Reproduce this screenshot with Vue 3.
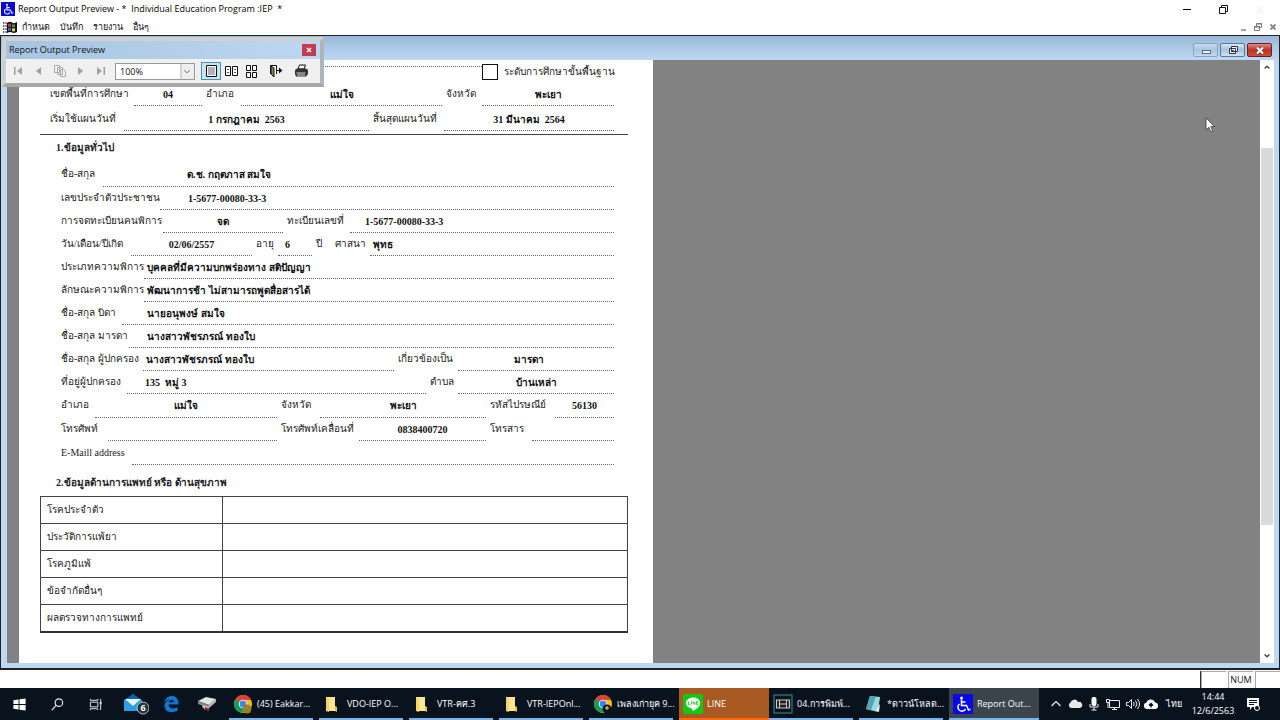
<script setup>
import { ref } from 'vue'

const zoom = ref('100%')
const basicLevel = ref(false)

const menus = ['กำหนด', 'บันทึก', 'รายงาน', 'อื่นๆ']

const planRows = [
  { key: 'area', cells: [
    { label: 'เขตพื้นที่การศึกษา' }, { value: '04' },
    { label: 'อำเภอ' }, { value: 'แม่ใจ' },
    { label: 'จังหวัด' }, { value: 'พะเยา' } ] },
  { key: 'period', cells: [
    { label: 'เริ่มใช้แผนวันที่' }, { value: '1 กรกฎาคม  2563' },
    { label: 'สิ้นสุดแผนวันที่' }, { value: '31 มีนาคม  2564' } ] },
]

const generalRows = [
  { key: 'name', cells: [{ label: 'ชื่อ-สกุล' }, { value: 'ด.ช. กฤตภาส สมใจ', at: 'far' }] },
  { key: 'citizen', cells: [{ label: 'เลขประจำตัวประชาชน' }, { value: '1-5677-00080-33-3', at: 'mid' }] },
  { key: 'register', cells: [
    { label: 'การจดทะเบียนคนพิการ' }, { value: 'จด' },
    { label: 'ทะเบียนเลขที่' }, { value: '1-5677-00080-33-3', at: 'near' } ] },
  { key: 'birth', cells: [
    { label: 'วัน/เดือน/ปีเกิด' }, { value: '02/06/2557' },
    { label: 'อายุ' }, { value: '6', at: 'tight' },
    { label: 'ปี' }, { label: 'ศาสนา' }, { value: 'พุทธ', at: 'start' } ] },
  { key: 'kind', cells: [{ label: 'ประเภทความพิการ' }, { value: 'บุคคลที่มีความบกพร่องทาง สติปัญญา', at: 'start' }] },
  { key: 'kind', cells: [{ label: 'ลักษณะความพิการ' }, { value: 'พัฒนาการช้า ไม่สามารถพูดสื่อสารได้', at: 'start' }] },
  { key: 'father', cells: [{ label: 'ชื่อ-สกุล บิดา' }, { value: 'นายอนุพงษ์ สมใจ', at: 'wide' }] },
  { key: 'mother', cells: [{ label: 'ชื่อ-สกุล มารดา' }, { value: 'นางสาวพัชรภรณ์ ทองใบ', at: 'inset' }] },
  { key: 'guardian', cells: [
    { label: 'ชื่อ-สกุล ผู้ปกครอง' }, { value: 'นางสาวพัชรภรณ์ ทองใบ', at: 'start' },
    { label: 'เกี่ยวข้องเป็น' }, { value: 'มารดา', at: 'shifted' } ] },
  { key: 'address', cells: [
    { label: 'ที่อยู่ผู้ปกครอง' }, { value: '135  หมู่ 3', at: 'inset' },
    { label: 'ตำบล' }, { value: 'บ้านเหล่า' } ] },
  { key: 'district', cells: [
    { label: 'อำเภอ' }, { value: 'แม่ใจ' },
    { label: 'จังหวัด' }, { value: 'พะเยา' },
    { label: 'รหัสไปรษณีย์' }, { value: '56130' } ] },
  { key: 'phone', cells: [
    { label: 'โทรศัพท์' }, { value: '' },
    { label: 'โทรศัพท์เคลื่อนที่' }, { value: '0838400720' },
    { label: 'โทรสาร' }, { value: '' } ] },
  { key: 'email', cells: [{ label: 'E-Maill address' }, { value: '' }] },
]

const healthRows = ['โรคประจำตัว', 'ประวัติการแพ้ยา', 'โรคภูมิแพ้', 'ข้อจำกัดอื่นๆ', 'ผลตรวจทางการแพทย์']

const tasks = [
  { icon: 'chrome', text: '(45) Eakkar...' },
  { icon: 'folder', text: 'VDO-IEP O...' },
  { icon: 'folder', text: 'VTR-คศ.3' },
  { icon: 'folder', text: 'VTR-IEPOnl...' },
  { icon: 'chrome', text: 'เพลงเก่ายุค 9...' },
  { icon: 'line', text: 'LINE', state: 'alert' },
  { icon: 'film', text: '04.การพิมพ์...' },
  { icon: 'note', text: '*ดาวน์โหลด...' },
  { icon: 'access', text: 'Report Out...', state: 'active' },
]
</script>

<template>
  <div class="desktop">
    <header class="titlebar">
      <svg class="app-icon" viewBox="0 0 20 20"><rect width="20" height="20" fill="#0808d8" /><g fill="none" stroke="#fff" stroke-width="1.500"><path d="M8.500 5.500v6h5l2 4.500 2-.7M8.500 8h4" /><path d="M6.500 10a4 4 0 1 0 6 5" /></g><circle cx="8.500" cy="4" r="1.500" fill="#fff" /></svg>
      <h1>Report Output Preview - *&nbsp; Individual Education Program :IEP&nbsp; *</h1>
      <div class="win-buttons">
        <button aria-label="Minimize"><svg viewBox="0 0 12 12"><path d="M2 6.500h8" stroke="#000" /></svg></button>
        <button aria-label="Restore"><svg viewBox="0 0 12 12" fill="none" stroke="#111"><path d="M2.500 4.500h6v6h-6zM4.500 4.500v-2h6v6h-2" /></svg></button>
        <button aria-label="Close"><svg viewBox="0 0 12 12" stroke="#eee"><path d="M3 3l7 7M10 3l-7 7" /></svg></button>
      </div>
    </header>

    <nav class="menubar">
      <svg class="flag" viewBox="0 0 14 12"><path d="M4 2q3-2 5-.5t5-.5v10q-3 1.500-5 .5t-5 .5z" fill="#111" /><path d="M0 2h4M0 5h4M0 8h4M0 11h4" stroke="#333" stroke-width="1.500" stroke-dasharray="1 .6" /><path d="M5 3q2-1 3 0v3q-1-1-3 0z" fill="#e03030" /><path d="M9 3q1.500 1 3 0v3q-1.500 1-3 0z" fill="#3a9a40" /><path d="M5 7q2-1 3 0v3q-1-1-3 0z" fill="#4060e0" /><path d="M9 7q1.500 1 3 0v3q-1.500 1-3 0z" fill="#e8d040" /></svg>
      <button v-for="m in menus" :key="m">{{ m }}</button>
      <div class="child-buttons">
        <button aria-label="Minimize report"><svg viewBox="0 0 10 10"><path d="M3 8h5" stroke="#888" stroke-width="1.500" /></svg></button>
        <button aria-label="Restore report"><svg viewBox="0 0 10 10" fill="none" stroke="#777"><path d="M1.500 4.500h5v4h-5zM3.500 4V1.500h5v4H7M3.500 2h5M1.500 5h5" /></svg></button>
        <button aria-label="Close report"><svg viewBox="0 0 10 10" stroke="#888" stroke-width="1.800"><path d="M2.500 2.500l5 5M7.500 2.500l-5 5" /></svg></button>
      </div>
    </nav>

    <main class="child">
      <div class="child-title">
        <button class="glass" aria-label="Minimize window"><svg viewBox="0 0 24 13"><rect x="8.500" y="6.500" width="8" height="3" fill="#eef4fa" stroke="#667" /></svg></button>
        <button class="glass bright" aria-label="Restore window"><svg viewBox="0 0 24 13" fill="#eef4fa" stroke="#334"><path d="M10.500 2.500h6v5h-6zM8.500 4.500h6v5h-6z" /><path d="M10.500 6.500h2v1h-2z" /></svg></button>
        <button class="glass red" aria-label="Close window"><svg viewBox="0 0 24 13"><path d="M9 3.500l6 6M15 3.500l-6 6" stroke="#533" stroke-width="3.400" /><path d="M9 3.500l6 6M15 3.500l-6 6" stroke="#fff" stroke-width="2.200" /></svg></button>
      </div>

      <div class="viewer">
        <div class="canvas">
          <article class="page">
            <div class="level">
              <span class="dots"></span>
              <label><input v-model="basicLevel" type="checkbox" />ระดับการศึกษาขั้นพื้นฐาน</label>
            </div>
            <section class="plan">
              <div v-for="row in planRows" :key="row.key" class="row" :class="row.key">
                <template v-for="(c, i) in row.cells" :key="i">
                  <span v-if="c.label" class="label">{{ c.label }}</span>
                  <span v-else class="value">{{ c.value }}</span>
                </template>
              </div>
            </section>
            <section class="general">
              <h2>1.ข้อมูลทั่วไป</h2>
              <div v-for="(row, r) in generalRows" :key="r" class="row" :class="row.key">
                <template v-for="(c, i) in row.cells" :key="i">
                  <span v-if="c.label" class="label">{{ c.label }}</span>
                  <span v-else class="value" :class="c.at">{{ c.value }}</span>
                </template>
              </div>
            </section>
            <section class="health">
              <h2>2.ข้อมูลด้านการแพทย์ หรือ ด้านสุขภาพ</h2>
              <table>
                <tbody>
                  <tr v-for="h in healthRows" :key="h"><th scope="row">{{ h }}</th><td></td></tr>
                </tbody>
              </table>
            </section>
          </article>
        </div>
        <div class="scrollbar">
          <button aria-label="Scroll up"><svg viewBox="0 0 10 10"><path d="M2 7l3-3 3 3" fill="none" stroke="#444" stroke-width="1.800" /></svg></button>
          <div class="track"><div class="thumb"></div></div>
          <button aria-label="Scroll down"><svg viewBox="0 0 10 10"><path d="M2 3l3 3 3-3" fill="none" stroke="#444" stroke-width="1.800" /></svg></button>
        </div>
        <svg class="pointer" viewBox="0 0 10 16"><path d="M1 .8v12l2.800-2.600 2 4.600 2-.9-2-4.400h3.600z" fill="#fff" stroke="#333" stroke-width=".8" /></svg>
      </div>
    </main>

    <div class="toolbox">
      <div class="toolbox-title">
        <span>Report Output Preview</span>
        <button aria-label="Close toolbar"><svg viewBox="0 0 8 8"><path d="M2 2l4 4M6 2L2 6" stroke="#fff" stroke-width="1.500" /></svg></button>
      </div>
      <div class="tools">
        <button class="nav" aria-label="First page"><svg viewBox="0 0 16 16" fill="#a0a0a0"><path d="M4 4h1.500v8H4zM12 4v8L7 8z" /></svg></button>
        <button class="nav" aria-label="Previous page"><svg viewBox="0 0 16 16" fill="#a0a0a0"><path d="M11 4v8L6 8z" /></svg></button>
        <button class="nav wide-nav" aria-label="Go to page"><svg viewBox="0 0 16 16" fill="#f4f4f4" stroke="#a8a8a8"><path d="M2.500 2.500h5v7h-5zM5.500 4.500h5v7h-5zM8.500 6.500h3l2 2v5h-5z" /></svg></button>
        <button class="nav" aria-label="Next page"><svg viewBox="0 0 16 16" fill="#a0a0a0"><path d="M5 4v8l5-4z" /></svg></button>
        <button class="nav" aria-label="Last page"><svg viewBox="0 0 16 16" fill="#a0a0a0"><path d="M4 4v8l5-4zM10.500 4H12v8h-1.500z" /></svg></button>
        <div class="zoom">
          <select v-model="zoom" aria-label="Zoom"><option>100%</option><option>75%</option></select>
          <svg viewBox="0 0 14 16"><path d="M.5 0v16" stroke="#b8b8b8" /><path d="M4 6.500l3 3 3-3" fill="none" stroke="#666" /></svg>
        </div>
        <button class="tool on" aria-label="One page"><svg viewBox="0 0 16 16"><path d="M3.500 2.500h10v11h-10z" fill="#fff" stroke="#111" /><path d="M5 5h7M5 7h7M5 9h7M5 11h7" stroke="#667" /></svg></button>
        <button class="tool" aria-label="Two pages"><svg viewBox="0 0 16 16" fill="#fff" stroke="#111"><path d="M2.500 3.500h5v9h-5zM9.500 3.500h5v9h-5z" /><path d="M4 6.500h2M4 9.500h2M11 6.500h2M11 9.500h2" stroke="#555" /></svg></button>
        <button class="tool" aria-label="Four pages"><svg viewBox="0 0 16 16" fill="#fff" stroke="#111"><path d="M3.500 2.500h4v5h-4zM9.500 2.500h4v5h-4zM3.500 9.500h4v5h-4zM9.500 9.500h4v5h-4z" /></svg></button>
        <button class="tool exit" aria-label="Close preview"><svg viewBox="0 0 16 16"><path d="M2.500 11V2.500h6V11" fill="#fff" stroke="#111" /><path d="M3 3l3 2v9l-3-3z" fill="#8a8a50" stroke="#111" /><path d="M8 7h3V4.500L14.500 7.500 11 10.500V8H8z" fill="#111" /></svg></button>
        <button class="tool" aria-label="Print"><svg viewBox="0 0 16 16"><path d="M5 6l1.500-4h6L11 6z" fill="#fff" stroke="#111" /><path d="M2 7l2-1.500h9l2 1.500v4l-2 2.500H3L2 11z" fill="#333" /><path d="M3.500 10h9M4 12h8" stroke="#ddd" /></svg></button>
      </div>
    </div>

    <footer class="status"><span class="cell"></span><span class="cell">NUM</span><span class="cell"></span></footer>

    <footer class="taskbar">
      <button class="sys" aria-label="Start"><svg viewBox="0 0 16 16" fill="#fff"><path d="M1.500 3.500L7 2.700v4.800H1.500zM8 2.500l6.500-1v6H8zM1.500 8.500H7v4.800l-5.500-.8zM8 8.500h6.500v6l-6.500-1z" /></svg></button>
      <button class="sys" aria-label="Search"><svg viewBox="0 0 16 16" fill="none" stroke="#eee" stroke-width="1.200"><circle cx="9.500" cy="6" r="4" /><path d="M6.500 9L2 14" /></svg></button>
      <button class="sys" aria-label="Task view"><svg viewBox="0 0 16 16" fill="none" stroke="#eee"><path d="M2.500 5.500h8v5h-8zM2.500 2v1.500h8V2M2.500 14v-1.500h8V14M13.500 2v3M13.500 8v6" /><path d="M13.500 5v3" stroke-width="2" /></svg></button>
      <button class="app mail" aria-label="Mail"><svg viewBox="0 0 26 24"><path d="M1 8l9-6 9 6v11H1z" fill="#0c62b0" /><path d="M1 8h18v11H1z" fill="#2aa0e8" /><path d="M2 7h16l-8 7z" fill="#e8f5ff" /><circle cx="20" cy="16" r="6" fill="#26323c" stroke="#b8c0c8" /></svg><span class="badge">6</span></button>
      <button class="app" aria-label="Edge"><svg viewBox="0 0 20 20"><path d="M3 9C4 4 8 1.500 11.500 2c4 .4 6 3.500 6 8.500H7.500c.3 4 5 5 9 2.800v3.500C10 20 3 17.500 3.500 11.500 4 8 7 6 9 5.500 6 5.500 4 7.500 3 9z" fill="#0f78d4" /><path d="M7.700 8.300h5.500c0-3.500-5-3.600-5.500 0z" fill="#08131d" /></svg></button>
      <button class="app" aria-label="Scanner"><svg viewBox="0 0 20 20"><path d="M1 7l8-4 10 2-7 6z" fill="#e4e4e4" /><path d="M1 7l11 4v3L1 10z" fill="#888" /><path d="M12 11l7-6v3l-7 6z" fill="#bbb" /><path d="M5 11l7 2v4l-6-3z" fill="#c8c8c8" /><path d="M8 13l4 1.500V17l-4-1.500z" fill="#b02020" /></svg></button>
      <div class="tasks">
        <button v-for="(t, i) in tasks" :key="i" class="task" :class="t.state">
          <svg v-if="t.icon === 'chrome'" viewBox="0 0 20 20"><circle cx="10" cy="10" r="9" fill="#f4c20d" /><path d="M10 10L2.200 5.500A9 9 0 0 1 18 6h-8z" fill="#db4437" /><path d="M10 10L2.200 5.500A9 9 0 0 0 9.500 19l4-7z" fill="#0f9d58" /><circle cx="10" cy="10" r="4.300" fill="#fff" /><circle cx="10" cy="10" r="3.400" fill="#4285f4" /><circle cx="14" cy="15" r="4.500" :fill="i ? '#111' : '#a87828'" /><circle cx="14" cy="14" r="1.800" :fill="i ? '#aaa' : '#68a040'" /></svg>
          <svg v-else-if="t.icon === 'folder'" viewBox="0 0 20 20"><path d="M3 3h9v12l2 1v1H3z" fill="#fbe596" /><path d="M3 3l3 2v13l-3-1z" fill="#f6d468" /><path d="M12 12l2 1v5l-2-1z" fill="#e8c050" /></svg>
          <svg v-else-if="t.icon === 'line'" viewBox="0 0 20 20"><rect width="20" height="20" rx="2" fill="#12c812" /><path d="M10 3.500c-4 0-7 2.500-7 5.500s2.500 5 6 5.500l.8 2.500c4-2 7.200-4.500 7.200-8s-3-5.500-7-5.500z" fill="#fff" /><path d="M5.500 7.500v3H7M8.500 7.500v3M10 10.500v-3l2 3v-3M15 7.500h-1.500v3H15M13.500 9H15" fill="none" stroke="#12c812" stroke-width=".8" /></svg>
          <svg v-else-if="t.icon === 'film'" viewBox="0 0 20 20"><rect x="1" y="1" width="18" height="18" fill="#0c1418" stroke="#3c8c9c" /><path d="M3.500 6h13v8h-13z" fill="#222" stroke="#ccc" stroke-width="1.200" /><path d="M6.500 6v8M13.500 6v8M7 10h6" stroke="#ccc" /></svg>
          <svg v-else-if="t.icon === 'note'" viewBox="0 0 20 20"><path d="M7 2l10 1-2 15-12-3z" fill="#9fd8dc" /><path d="M7 2l6 .7L8 16l-5-1z" fill="#4ea8b4" /><path d="M13 16l4-6-1 8z" fill="#e8f8f8" /></svg>
          <svg v-else viewBox="0 0 20 20"><rect width="20" height="20" fill="#0808e8" /><g fill="none" stroke="#fff" stroke-width="1.500"><path d="M8.500 5.500v6h5l2 4.500 2-.7M8.500 8h4" /><path d="M6.500 10a4 4 0 1 0 6 5" /></g><circle cx="8.500" cy="4" r="1.500" fill="#fff" /></svg>
          <span>{{ t.text }}</span>
        </button>
      </div>
      <div class="tray">
        <svg viewBox="0 0 16 16"><path d="M3.500 10L8 5.500l4.500 4.500" fill="none" stroke="#eee" stroke-width="1.200" /></svg>
        <svg viewBox="0 0 16 16"><path d="M4 12a3 3 0 0 1-.5-5.500A4 4 0 0 1 11 6a3 3 0 0 1 2 6z" fill="#e8e8e8" /></svg>
        <svg viewBox="0 0 16 16"><rect x="5.500" y="1" width="5" height="9" rx="2" fill="#fff" /><path d="M4 8v3h8V8M8 11v3M5.500 14h5" fill="none" stroke="#eee" /></svg>
        <svg viewBox="0 0 16 16" fill="none" stroke="#eee"><path d="M4.500 4.500h10v7h-10zM9.500 12v2M7 13.500h5" /><path d="M1.500 3.500h3v3h-3zM3 7v5" /></svg>
        <svg viewBox="0 0 16 16" fill="none" stroke="#eee"><path d="M2.500 6.500h2l3-3v9l-3-3h-2zM9.500 6q1.500 2 0 4M11.500 4.500q3 3.500 0 7M13.500 3q4 5 0 10" /></svg>
        <svg viewBox="0 0 16 16"><path d="M4 13a3.300 3.300 0 0 1-.5-6.500A4.500 4.500 0 0 1 12 6.500 3.300 3.300 0 0 1 12.500 13z" fill="#fff" /><path d="M8 11.500V8M6 9.500l2-2 2 2" fill="none" stroke="#08131d" stroke-width="1.400" /></svg>
        <span class="lang">ไทย</span>
        <time class="clock">14:44<br />12/6/2563</time>
        <svg class="notice" viewBox="0 0 16 16"><path d="M2 2h12v9H7l-2 3v-3H2z" fill="#fff" /><path d="M4 4.500h8M4 6.500h8M4 8.500h5" stroke="#08131d" /><circle cx="12" cy="12" r="2.500" fill="#08131d" stroke="#fff" /></svg>
      </div>
    </footer>
  </div>
</template>

<style>
html, body { margin: 0; background: #fff; overflow: hidden; }
</style>

<style scoped>
* { box-sizing: border-box; }
button { border: 0; padding: 0; margin: 0; background: none; font: inherit; color: inherit; display: flex; align-items: center; justify-content: center; flex: none; }
svg { display: block; flex: none; }
h1, h2 { margin: 0; }

.desktop { position: relative; height: 100vh; display: flex; flex-direction: column; font: 9px/14px "Open Sans", "Noto Sans", sans-serif; color: #111; overflow: hidden; }
.titlebar { display: flex; align-items: center; height: 18px; padding-left: 1px; flex: none; }
.app-icon { width: 14px; height: 14px; margin-right: 3px; }
.titlebar h1 { font-size: 9px; font-weight: 400; white-space: pre; color: #000; }
.win-buttons { margin-left: auto; display: flex; padding-right: 3px; }
.win-buttons button { width: 36px; }
.win-buttons svg { width: 12px; height: 12px; }
.menubar { display: flex; align-items: center; height: 17px; padding-left: 3px; gap: 10px; flex: none; }
.flag { width: 14px; height: 12px; margin-right: -5px; }
.child-buttons { margin-left: auto; display: flex; gap: 5px; padding-right: 2px; }
.child-buttons svg { width: 10px; height: 10px; }

.child { flex: 1; min-height: 0; display: flex; flex-direction: column; border: solid #222; border-width: 1px 1px 2px; background: linear-gradient(#9ab9d8, #bdd8f2 24px, #bdd8f2); padding: 0 5px 5px 6px; }
.child-title { display: flex; align-items: center; justify-content: flex-end; gap: 2px; height: 24px; padding: 4px 2px 0 0; flex: none; }
.glass { width: 25px; height: 14px; border: 1px solid #8ba3bd; border-radius: 2px; background: linear-gradient(#c5daf0, #a9c5e2 50%, #c0d8ef); }
.glass.bright { border-color: #5d7896; background: linear-gradient(#d7e8f8, #a4c2df 50%, #c9e2f8); }
.glass.red { border-color: #6a2020; background: linear-gradient(#e08a80, #c03028 50%, #d04c3c); }
.glass svg { width: 24px; height: 13px; }

.viewer { position: relative; flex: 1; min-height: 0; display: flex; }
.canvas { flex: 1; min-width: 0; background: #828282; padding-left: 12px; overflow: hidden; }
.page { width: 634px; min-height: 100%; background: #fff; padding: 0 25px 0 21px; font: 10px/16px "Liberation Serif", "Angsana New", serif; color: #222; }
.level { display: flex; height: 23px; padding: 4px 16px 0 10px; }
.dots { flex: 1; height: 3px; border-bottom: 1px dotted #666; }
.level label { display: flex; align-items: center; gap: 6px; height: 16px; width: 130px; white-space: nowrap; }
.level input { appearance: none; width: 16px; height: 16px; margin: 0; border: 1px solid #111; background: #fff; flex: none; }

.row { display: grid; grid-template-rows: 100%; height: 23px; white-space: pre; }
.label { line-height: 22px; }
.value { border-bottom: 1px dotted #666; text-align: center; font-weight: 700; line-height: 24px; margin-right: 4px; color: #111; }
.value:last-child { margin-right: 0; }
.value.far, .value.mid, .value.near, .value.tight, .value.start, .value.inset, .value.wide { text-align: left; }
.value.far { padding-left: 84px; }
.value.mid { padding-left: 28px; }
.value.near { padding-left: 15px; }
.value.tight { padding-left: 7px; }
.value.start { padding-left: 3px; }
.value.inset { padding-left: 18px; }
.value.wide { padding-left: 25px; }
.value.shifted { padding-right: 14px; }

.plan { padding: 0 14px 3px 10px; border-bottom: 1px solid #444; }
.area { grid-template-columns: 84px 72px 35px 205px 36px 1fr; }
.period { grid-template-columns: 74px 249px 71px 1fr; margin-top: 2px; }
.general { padding: 0 14px 0 21px; }
.general h2, .health h2 { font-size: 10px; font-weight: 700; line-height: 16px; }
.general h2 { margin: 5px 0 7px -5px; height: 16px; }
.name { grid-template-columns: 42px 1fr; height: 24px; }
.citizen { grid-template-columns: 99px 1fr; }
.register { grid-template-columns: 102px 124px 63px 1fr; }
.birth { grid-template-columns: 70px 125px 22px 38px 19px 35px 1fr; }
.kind { grid-template-columns: 83px 1fr; }
.father { grid-template-columns: 61px 1fr; }
.mother { grid-template-columns: 68px 1fr; }
.guardian { grid-template-columns: 82px 255px 60px 1fr; }
.address { grid-template-columns: 66px 303px 28px 1fr; }
.district { grid-template-columns: 34px 186px 39px 170px 65px 1fr; height: 24px; }
.phone { grid-template-columns: 47px 173px 78px 131px 42px 1fr; }
.email { grid-template-columns: 71px 1fr; height: 24px; }
.email .label { line-height: 24px; }
.health h2 { margin: 10px 0 5px 16px; }
table { width: 100%; border-collapse: collapse; border: 1px solid #333; border-bottom-width: 2px; }
th, td { height: 27px; padding: 0 6px; border: 1px solid #444; text-align: left; font-weight: 400; }
th { width: 182px; }

.scrollbar { width: 14px; background: #fff; display: flex; flex-direction: column; flex: none; }
.scrollbar button { width: 13px; height: 14px; }
.scrollbar svg { width: 8px; height: 8px; }
.track { flex: 1; padding: 74px 1px 124px; display: flex; }
.thumb { flex: 1; background: #dadada; }
.pointer { position: absolute; right: 59px; top: 57px; width: 10px; height: 16px; }

.toolbox { position: absolute; left: 2px; top: 37px; width: 322px; border: 4px solid #b6bac0; border-color: #d0d0d0 #aeb4bb #a6a6a6 #d0d0d0; background: #f0f0f0; }
.toolbox-title { display: flex; justify-content: space-between; align-items: center; height: 18px; padding: 0 4px 0 3px; background: linear-gradient(90deg, #a6c4e2, #bcd7f1); }
.toolbox-title button { width: 14px; height: 12px; background: #c43a50; }
.toolbox-title svg { width: 8px; height: 8px; }
.tools { display: flex; align-items: center; height: 24px; padding: 0 2px; }
.nav { width: 20px; height: 18px; }
.wide-nav { width: 23px; }
.nav svg, .tool svg { width: 16px; height: 16px; }
.zoom { position: relative; width: 80px; height: 17px; margin: 0 6px 0 4px; }
.zoom select { appearance: none; width: 100%; height: 17px; border: 1px solid #999; border-radius: 0; background: #fff; padding: 0 4px; font: 9px/15px "Open Sans", sans-serif; color: #111; }
.zoom svg { position: absolute; right: 1px; top: 1px; width: 14px; height: 15px; background: #eee; pointer-events: none; }
.tool { width: 20px; height: 18px; }
.tool.on { border: 1px solid #4a90b8; background: #cbe4f4; }
.tool.exit { margin: 0 5px; }

.status { display: flex; justify-content: flex-end; height: 18px; padding-top: 1px; gap: 2px; flex: none; }
.status .cell { width: 25px; border: 1px solid #aaa; border-width: 1px 0 0 1px; text-align: center; line-height: 16px; }
.status .cell:first-child { box-shadow: -1px 0 #333; }

.taskbar { display: flex; height: 32px; background: #08131d; color: #fff; flex: none; }
.sys { width: 38px; height: 32px; }
.sys svg { width: 15px; height: 15px; }
.app { width: 36px; height: 32px; position: relative; }
.app svg { width: 20px; height: 20px; }
.app.mail { width: 34px; margin-left: 5px; }
.app.mail svg { width: 26px; height: 24px; }
.badge { position: absolute; right: 4px; bottom: 5px; width: 12px; line-height: 14px; text-align: center; font-weight: 700; }
.tasks { display: flex; flex: 1; min-width: 0; margin-left: 4px; }
.task { width: 90px; height: 32px; padding-left: 4px; justify-content: flex-start; gap: 4px; white-space: nowrap; background: linear-gradient(#7cb4e8, #7cb4e8) left bottom / 84px 2px no-repeat; }
.task svg { width: 20px; height: 20px; }
.task.alert { background: linear-gradient(#ff6a10, #ff6a10) left bottom / 90px 2px no-repeat #a85a22; }
.task.active { background: linear-gradient(#7cb4e8, #7cb4e8) left bottom / 90px 2px no-repeat #3c444c; }
.tray { display: flex; align-items: center; gap: 3px; padding-right: 19px; flex: none; }
.tray svg { width: 16px; height: 16px; }
.lang { margin-left: 4px; }
.clock { width: 50px; text-align: center; margin-left: 3px; }
.tray .notice { margin-left: 4px; }
</style>
